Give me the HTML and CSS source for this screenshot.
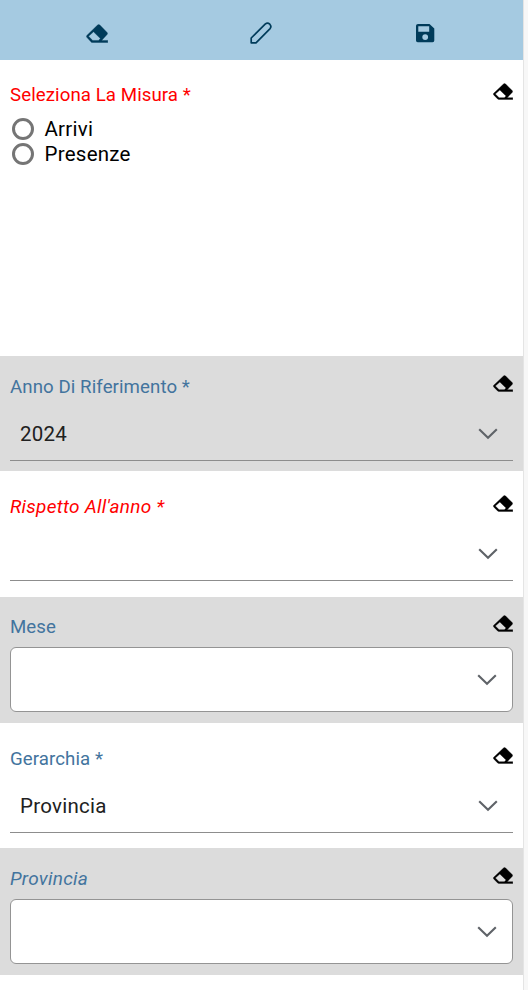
FILE: index.html
```html
<!DOCTYPE html>
<html lang="it">
<head>
  <meta charset="UTF-8">
  <meta name="viewport" content="width=device-width, initial-scale=1.0">
  <title>Parametri</title>
  <link rel="stylesheet" href="styles.css">
</head>
<body>
  <svg class="sprite" aria-hidden="true">
    <symbol id="eraser" viewBox="0 0 19 17" preserveAspectRatio="none">
      <path fill="currentColor" fill-rule="evenodd" stroke="currentColor" stroke-width=".35" d="M10 1L.7 10.3Q0 11 .7 11.9L4.2 15.8Q4.8 16.6 5.7 16.6H18.8V14.7H13.5L18.2 9.4Q19 8.5 18.2 7.6L12 1Q11 .1 10 1ZM6.5 7L12.4 13L10.8 14.7H5.8L2.2 11Z"/>
    </symbol>
    <symbol id="chevron" viewBox="0 0 20 12">
      <path fill="none" stroke="#5f6368" stroke-width="2.1" d="M1.2 1.2L10 9.8L18.8 1.2"/>
    </symbol>
  </svg>
  <div class="panel">
    <div class="toolbar">
      <button class="tool" aria-label="Cancella"><svg class="tool-eraser"><use href="#eraser"/></svg></button>
      <button class="tool" aria-label="Modifica">
        <svg class="tool-icon" viewBox="0 0 22 22" fill="none" stroke="currentColor" stroke-width="1.7" stroke-linejoin="round">
          <path d="M1.2 20.8V16L15.4 1.9Q17.6 .2 19.8 2.2Q21.8 4.4 20.1 6.6L6 20.8Z"/>
        </svg>
      </button>
      <button class="tool" aria-label="Salva">
        <svg class="tool-icon" viewBox="0 0 22 22">
          <path fill="currentColor" fill-rule="evenodd" d="M3 2H14.5L19.3 6.5V18.5Q19.3 20.2 17.6 20.2H2.7Q1 20.2 1 18.5V3.8Q1 2 3 2ZM3.3 4.3V9.7H14.2V4.3ZM10.2 12.2A2.9 2.9 0 1 0 10.2 18A2.9 2.9 0 1 0 10.2 12.2Z"/>
        </svg>
      </button>
    </div>
    <div class="param param-radio">
      <div class="param-head"><span class="label missing">Seleziona La Misura *</span><svg class="eraser"><use href="#eraser"/></svg></div>
      <div class="radios">
        <label class="radio"><input type="radio" name="misura">Arrivi</label>
        <label class="radio"><input type="radio" name="misura">Presenze</label>
      </div>
    </div>
    <div class="param gray param-anno">
      <div class="param-head"><span class="label">Anno Di Riferimento *</span><svg class="eraser"><use href="#eraser"/></svg></div>
      <div class="select"><span>2024</span><svg class="chevron"><use href="#chevron"/></svg></div>
    </div>
    <div class="param param-rispetto">
      <div class="param-head"><span class="label missing dependent">Rispetto All'anno *</span><svg class="eraser"><use href="#eraser"/></svg></div>
      <div class="select"><span></span><svg class="chevron"><use href="#chevron"/></svg></div>
    </div>
    <div class="param gray param-mese">
      <div class="param-head"><span class="label">Mese</span><svg class="eraser"><use href="#eraser"/></svg></div>
      <div class="select boxed"><span></span><svg class="chevron"><use href="#chevron"/></svg></div>
    </div>
    <div class="param param-gerarchia">
      <div class="param-head"><span class="label">Gerarchia *</span><svg class="eraser"><use href="#eraser"/></svg></div>
      <div class="select"><span>Provincia</span><svg class="chevron"><use href="#chevron"/></svg></div>
    </div>
    <div class="param gray param-provincia">
      <div class="param-head"><span class="label dependent">Provincia</span><svg class="eraser"><use href="#eraser"/></svg></div>
      <div class="select boxed"><span></span><svg class="chevron"><use href="#chevron"/></svg></div>
    </div>
  </div>
</body>
</html>
```
FILE: styles.css
```css
* { box-sizing: border-box; }
body {
  margin: 0;
  background-color: #f7f7f7;
  font-family: Roboto, sans-serif;
  font-size: 20.5px;
  color: #212121;
}
.sprite {
  display: none;
}
.panel {
  width: 524px;
  height: 990px;
  overflow: hidden;
  background-color: #fff;
  border-right: 1px solid #e4e4e4;
}
.toolbar {
  height: 60px;
  padding: 0 15px;
  display: flex;
  align-items: center;
  background-color: #a5cae1;
}
.tool {
  flex: 1;
  display: flex;
  justify-content: center;
  padding: 6px 0 0;
  border: none;
  background: none;
  color: #003b5a;
}
.tool-eraser {
  width: 22px;
  height: 19px;
}
.tool-icon {
  width: 22px;
  height: 22px;
}
.param {
  padding: 0 10px;
}
.gray {
  background-color: #dcdcdc;
}
.param-head {
  height: 24px;
  display: flex;
  justify-content: space-between;
}
.label {
  font-size: 18.67px;
  line-height: 26px;
  letter-spacing: 0.08px;
  color: #43749e;
}
.missing {
  color: #f00;
}
.dependent {
  font-size: 19px;
  font-style: italic;
  letter-spacing: 0.25px;
}
.eraser {
  width: 20px;
  height: 17px;
  margin-top: 1px;
  color: #000;
}
.param-radio {
  height: 296px;
  padding-top: 22px;
}
.param-anno {
  height: 115px;
  padding-top: 18px;
}
.param-rispetto {
  height: 126px;
  padding-top: 23px;
}
.param-mese {
  height: 126px;
  padding-top: 17px;
}
.param-gerarchia {
  height: 125px;
  padding-top: 23px;
}
.param-provincia {
  height: 127px;
  padding-top: 18px;
}
.radios {
  padding: 10px 0 0 2px;
}
.radio {
  height: 25px;
  display: flex;
  align-items: center;
  gap: 10.5px;
  letter-spacing: 0.25px;
  color: #000;
}
.radio input {
  appearance: none;
  width: 22px;
  height: 22px;
  margin: 0;
  border: 3px solid #757575;
  border-radius: 50%;
}
.select {
  height: 63px;
  padding: 10px 15px 0 10px;
  display: flex;
  justify-content: space-between;
  align-items: center;
  border-bottom: 1px solid #8d8d8d;
  letter-spacing: 0.25px;
}
.boxed {
  height: 65px;
  margin-top: 9px;
  padding: 0 15px 0 10px;
  background-color: #fff;
  border: 1px solid #949494;
  border-radius: 6px;
}
.chevron {
  width: 20px;
  height: 12px;
}
```
